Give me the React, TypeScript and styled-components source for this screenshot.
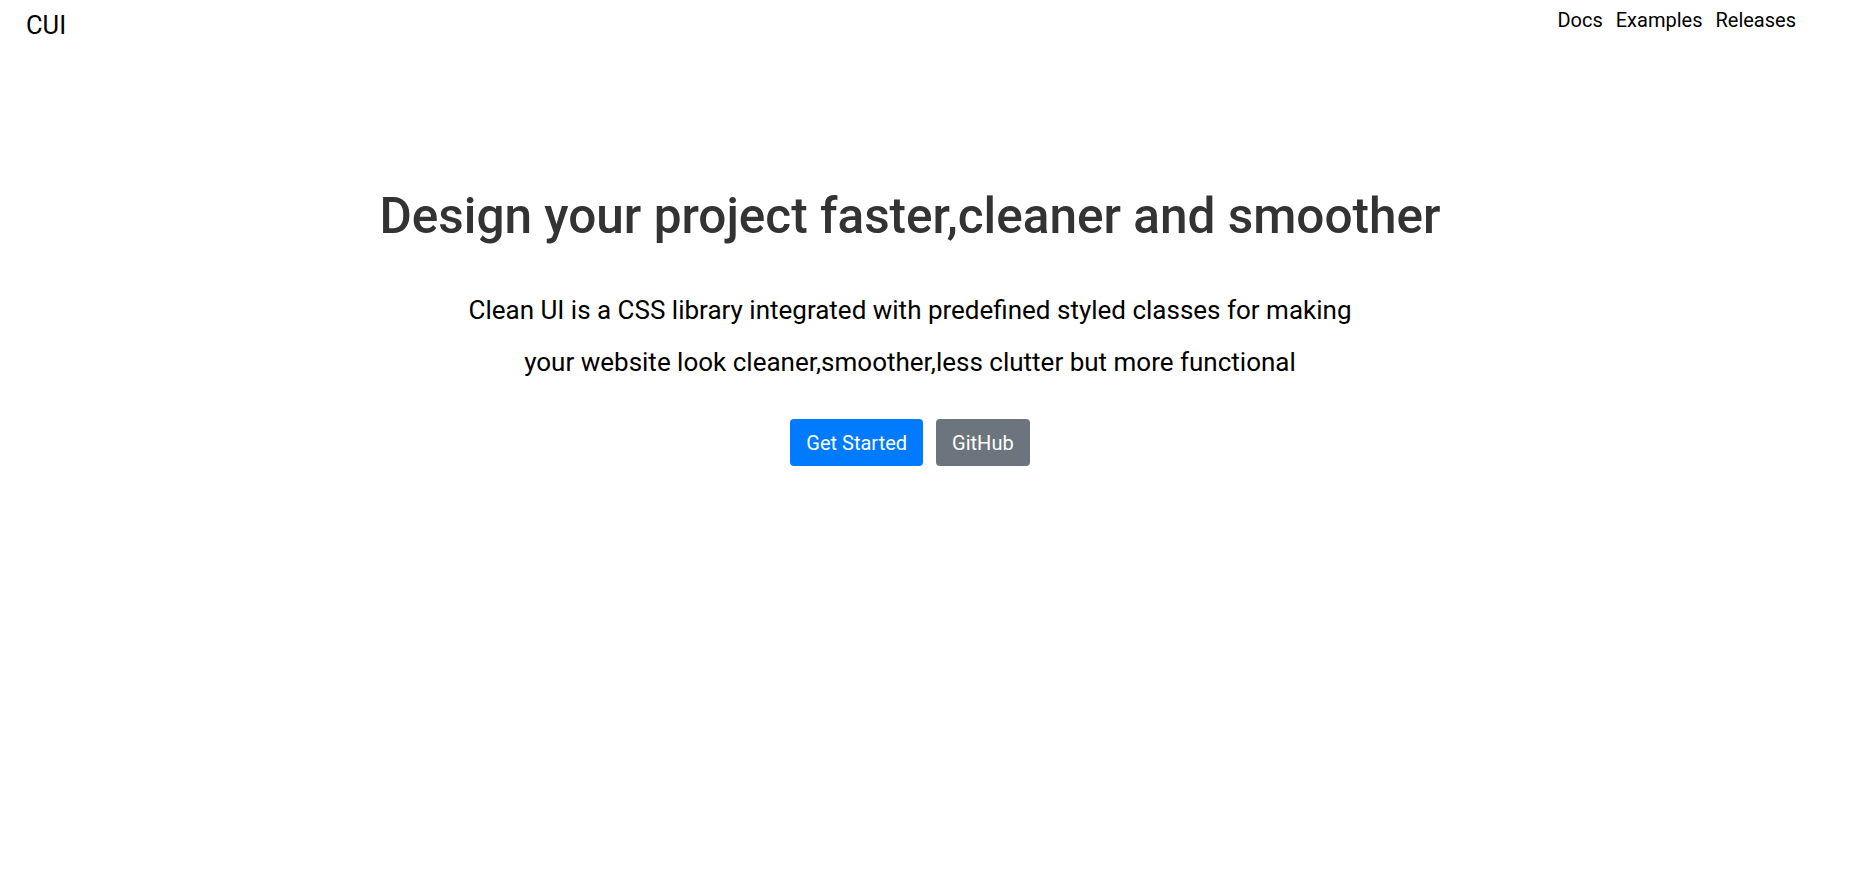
import styled, { createGlobalStyle } from 'styled-components';

const GlobalStyle = createGlobalStyle`
  html, body {
    margin: 0;
    padding: 0;
    background: #fff;
    font-family: Roboto, 'Liberation Sans', sans-serif;
  }
`;

const Header = styled.header`
  display: flex;
  justify-content: space-between;
  align-items: flex-start;
  padding: 0 75px 0 26px;
`;

const Logo = styled.a`
  font-size: 25.5px;
  line-height: 28px;
  margin-top: 11px;
  color: #000;
  text-decoration: none;
`;

const Nav = styled.nav`
  display: flex;
  gap: 13px;
  margin-top: 8px;
`;

const NavLink = styled.a`
  font-size: 20px;
  line-height: 24px;
  color: #000;
  text-decoration: none;
  cursor: pointer;
`;

const Hero = styled.main`
  display: flex;
  flex-direction: column;
  align-items: center;
  text-align: center;
  padding: 149px 51px 0 0;
`;

const Title = styled.h1`
  margin: 0;
  font-size: 49.5px;
  font-weight: 500;
  line-height: 56px;
  color: #333;
`;

const Lead = styled.p`
  margin: 40px 0 0;
  font-size: 26px;
  line-height: 52px;
  color: #000;
`;

const Actions = styled.div`
  display: flex;
  gap: 13px;
  margin-top: 31px;
`;

const Button = styled.button<{ $variant: 'primary' | 'secondary' }>`
  height: 47px;
  padding: 0 16px;
  border: none;
  border-radius: 4px;
  font-family: inherit;
  font-size: 20px;
  color: #fff;
  background: ${(p) => (p.$variant === 'primary' ? '#007bff' : '#6c757d')};
  cursor: pointer;
`;

export default function App() {
  return (
    <>
      <GlobalStyle />
      <Header>
        <Logo href="#">CUI</Logo>
        <Nav>
          <NavLink>Docs</NavLink>
          <NavLink>Examples</NavLink>
          <NavLink>Releases</NavLink>
        </Nav>
      </Header>
      <Hero>
        <Title>Design your project faster,cleaner and smoother</Title>
        <Lead>
          Clean UI is a CSS library integrated with predefined styled classes for making
          <br />
          your website look cleaner,smoother,less clutter but more functional
        </Lead>
        <Actions>
          <Button $variant="primary">Get Started</Button>
          <Button $variant="secondary">GitHub</Button>
        </Actions>
      </Hero>
    </>
  );
}
